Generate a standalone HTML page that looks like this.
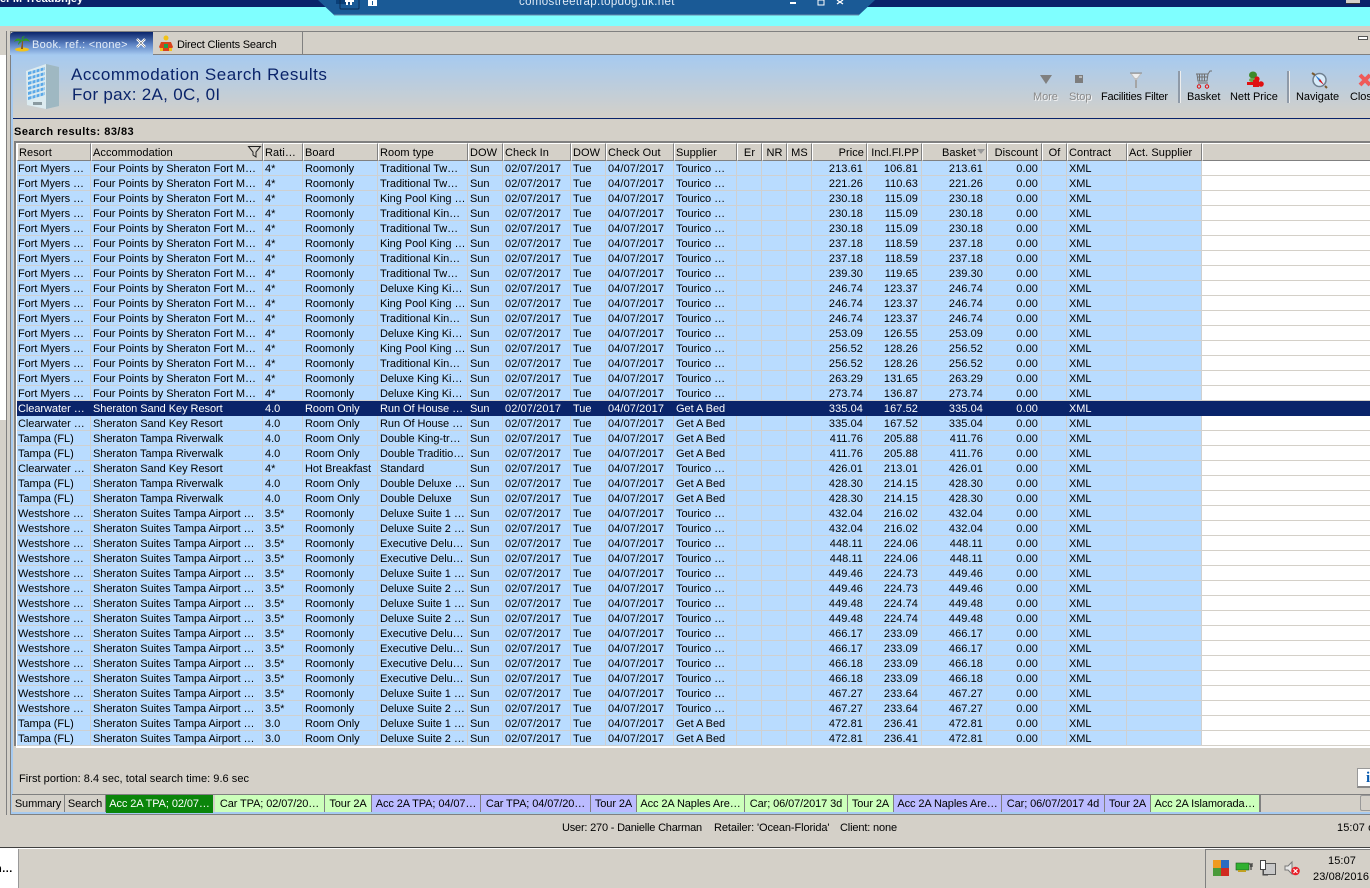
<!DOCTYPE html>
<html><head><meta charset="utf-8"><title>Accommodation Search Results</title>
<style>
html,body{margin:0;padding:0}
body{width:1370px;height:888px;overflow:hidden;position:relative;background:#d4d0c8;font:11px/15px "Liberation Sans",sans-serif;color:#000}
.a{position:absolute;white-space:nowrap}
table{position:absolute;left:17px;table-layout:fixed;border-collapse:separate;border-spacing:0;width:1353px}
#rows{top:161px}
#rows td{height:12px;line-height:12px;padding:2px 0 0 2px;border-right:1px solid #cfd0d0;border-bottom:1px solid #cfd0d0;background:#b9dcff;white-space:nowrap;overflow:hidden;color:#000;letter-spacing:-.05px}
#rows td:nth-child(1){padding-left:1px}
#rows td:nth-child(7),#rows td:nth-child(9){letter-spacing:.1px}
#rows td:nth-child(n+14):nth-child(-n+17){text-align:right;padding:2px 3px 0 0;letter-spacing:.07px}
#rows td:last-child{background:#fff;border-right:0;border-bottom-color:#d4d0c8}
#rows tr.s td{background:#0a246a;color:#fff;border-color:#0a246a}
#rows tr.s td:last-child{background:#0a246a}
#hd{top:143px}
#hd td{height:13px;line-height:13px;padding:3px 0 0 1px;background:#d4d0c8;border-top:1px solid #fff;border-left:1px solid #fff;border-right:1px solid #808080;border-bottom:1px solid #808080;white-space:nowrap;overflow:hidden;letter-spacing:.07px;box-sizing:content-box}
#hd td.r{text-align:right;padding-right:2px;padding-left:0}
#hd td:last-child{border-right:0}
.tab{position:absolute;top:795px;height:16px;padding-top:1px;line-height:17px;text-align:center;white-space:nowrap;overflow:hidden;border-right:1px solid #808080;letter-spacing:-.1px}
.g{background:#ccffbb}.p{background:#bbbbff}.n{background:#d4d0c8}
.tb{position:absolute;top:91px;line-height:13px;white-space:nowrap;letter-spacing:-.05px}
.dis{color:#8a8a8a;text-shadow:1px 1px 0 #f5f5f5}
svg{position:absolute;overflow:visible}
</style></head><body>
<div class="a" style="left:0;top:0;width:1370px;height:7px;background:#0a246a"></div>
<div class="a" style="left:0;top:-8px;color:#fff;font-size:11px;font-weight:bold;line-height:15px">eFM Treadbnjey</div>
<div class="a" style="left:0;top:7px;width:1370px;height:19px;background:#7fffff"></div>
<svg style="left:318px;top:0" width="560" height="16"><path d="M0 0H557L541 15H16Z" fill="#1a5a96"/><path d="M16 15H541" stroke="#6a8cac" stroke-width="1"/><rect x="18" y="0" width="14" height="4" fill="#0a3f78"/></svg>
<svg style="left:340px;top:0" width="40" height="10"><path d="M0 0V8a1 1 0 0 0 1 1H18a1 1 0 0 0 1-1V0" fill="none" stroke="#0b2c55"/><path d="M5 0H14V2H12V5H10V2H8V5H6V2H5Z" fill="#fff"/><rect x="28" y="0" width="9" height="6" fill="#fff"/><rect x="32" y="1" width="1" height="4" fill="#1a5a96"/></svg>
<div class="a" style="left:519px;top:-5px;color:#dfeaf5;font-size:11.5px;line-height:15px;letter-spacing:.35px">comostreetrap.topdog.uk.net</div>
<svg style="left:790px;top:0" width="60" height="8"><rect x="0" y="2" width="6" height="2" fill="#fff"/><rect x="28" y="0" width="6" height="5" fill="none" stroke="#fff"/><path d="M47 0l6 4M53 0l-6 4" stroke="#fff" stroke-width="1.3"/></svg>
<div class="a" style="left:1346px;top:0;width:14px;height:3px;background:#d4d0c8;border-bottom:1px solid #333"></div>

<div class="a" style="left:0;top:31px;width:6px;height:784px;border-right:1px solid #808080;background:#fff"></div>
<div class="a" style="left:0;top:31px;width:6px;height:24px;background:#d4d0c8"></div>
<div class="a" style="left:0;top:420px;width:6px;height:395px;background:#d4d0c8"></div>

<div class="a" style="left:10px;top:31px;width:1360px;height:784px;border-top:1px solid #808080;border-bottom:1px solid #808080;border-left:1px solid #808080;box-sizing:border-box;background:#d4d0c8"></div>
<div class="a" style="left:11px;top:54px;width:2px;height:760px;background:#a6caf0"></div>
<div class="a" style="left:13px;top:812px;width:1357px;height:2px;background:#a6caf0"></div>

<div class="a" style="left:10px;top:32px;width:143px;height:23px;border-radius:4px 0 0 0;background:linear-gradient(#0a246a,#5f85c5 55%,#a6caf0)"></div>
<div class="a" style="left:153px;top:32px;width:149px;height:22px;border-right:1px solid #808080;border-bottom:1px solid #808080;background:#d4d0c8"></div>
<div class="a" style="left:302px;top:54px;width:1068px;height:1px;background:#808080"></div>
<div class="a" style="left:32px;top:38px;color:#e6eef8;letter-spacing:.3px">Book. ref.: &lt;none&gt;</div>
<div class="a" style="left:177px;top:38px;letter-spacing:-.18px">Direct Clients Search</div>
<svg style="left:136px;top:38px" width="11" height="11"><path d="M1 1l8 8M9 1l-8 8" stroke="#fff" stroke-width="2.4"/><path d="M1 1l8 8M9 1l-8 8" stroke="#333" stroke-width=".5"/></svg>
<svg style="left:13px;top:35px" width="18" height="17"><ellipse cx="9" cy="14.5" rx="7" ry="2" fill="#f2c218"/><path d="M9 6C9 9 8 11 8 14H10C10 11 10 9 10 6Z" fill="#8a5a1e"/><path d="M9 6C6 2 3 3 1 7 4 5 6 6 9 6ZM9 6C12 2 15 3 17 7 14 5 12 6 9 6ZM9 6C8 2 10 1 12 1 10 2 10 4 9 6ZM9 6C7 4 5 8 5 10 7 8 8 7 9 6Z" fill="#2f9a1f"/></svg>
<svg style="left:159px;top:35px" width="16" height="17"><circle cx="7" cy="3" r="2.5" fill="#f2c218"/><path d="M2 7H12L14 12 11 16H3L0 12Z" fill="#d9431b"/><rect x="5" y="9" width="4" height="4" fill="#22a04a"/><rect x="1" y="13" width="3" height="3" fill="#f2c218"/><rect x="10" y="13" width="3" height="3" fill="#f2c218"/></svg>
<div class="a" style="left:1358px;top:36px;width:8px;height:2px;background:#fff;border:1px solid #555"></div>

<div class="a" style="left:13px;top:55px;width:1357px;height:63px;background:linear-gradient(#a6caf0,#d4d0c8)"></div>
<div class="a" style="left:13px;top:118px;width:1357px;height:1px;background:#0a246a"></div>
<svg style="left:24px;top:62px" width="37" height="48"><path d="M2 9L22 2 35 5V44L22 47 3 43Z" fill="#bcd0d8"/><path d="M22 2L35 5V44L22 47Z" fill="#9fb8c2"/><path d="M2 9L22 2V47L3 43Z" fill="#dcebf0"/><g fill="#5aa8e8"><path d="M4 10L21 5V8L4 13ZM4 15L21 10V13L4 18ZM4 20L21 15V18L4 23ZM4 25L21 20V23L4 28ZM4 30L21 25V28L4 33ZM4 35L21 30V33L4 38Z"/></g><g stroke="#dcebf0" stroke-width="1"><path d="M8 8V40M12 7V41M16 6V42M20 5V43"/></g><rect x="9" y="40" width="9" height="3" fill="#8a9aa0"/></svg>
<div class="a" style="left:71px;top:64px;font-size:17px;line-height:22px;color:#0a246a;letter-spacing:.52px">Accommodation Search Results</div>
<div class="a" style="left:72px;top:84px;font-size:17px;line-height:22px;color:#0a246a;letter-spacing:.3px">For pax: 2A, 0C, 0I</div>

<svg style="left:1040px;top:75px" width="12" height="10"><path d="M0 0H12L6 9Z" fill="#808080"/></svg>
<svg style="left:1075px;top:75px" width="9" height="9"><rect width="8" height="8" fill="#7d7d7d"/><rect x="4" y="1" width="3" height="2" fill="#b8b8b8"/></svg>
<svg style="left:1129px;top:72px" width="14" height="17"><path d="M1 1H13L8 8V16H6V8Z" fill="#c0c0c0"/><path d="M3 2H11L8 6H6Z" fill="#eee"/><path d="M1 1H13" stroke="#8a8a8a"/><path d="M7 8V16" stroke="#8a8a8a"/></svg>
<div class="a" style="left:1178px;top:71px;width:2px;height:32px;background:#8f9aa8;border-right:1px solid #eee"></div>
<svg style="left:1196px;top:71px" width="16" height="18"><path d="M0 3H12L14 0H16" fill="none" stroke="#707070"/><path d="M1 3L2 10H11L12 3M3.5 3V10M6 3V10M8.5 3V10M2 6H11.5" fill="none" stroke="#707070"/><path d="M2 12H12" stroke="#707070"/><circle cx="3" cy="15.5" r="1.7" fill="none" stroke="#e01010"/><circle cx="11" cy="15.5" r="1.7" fill="none" stroke="#e01010"/></svg>
<svg style="left:1247px;top:71px" width="17" height="18"><ellipse cx="6" cy="4" rx="4" ry="3.5" fill="#3f8a2a"/><ellipse cx="5" cy="9" rx="3" ry="2" fill="#6aa84a"/><circle cx="10" cy="8" r="2.6" fill="#e01010"/><rect x="0" y="11" width="6" height="3" fill="#e01010"/><rect x="6" y="9" width="6" height="7" fill="#e01010"/><circle cx="14" cy="13" r="2.8" fill="#e01010"/></svg>
<div class="a" style="left:1287px;top:71px;width:2px;height:32px;background:#8f9aa8;border-right:1px solid #eee"></div>
<svg style="left:1311px;top:71px" width="17" height="18"><circle cx="8.5" cy="9" r="6.5" fill="#d8ecfa" stroke="#6f7f8f" stroke-width="1.5"/><path d="M4 4L9 8 13 14 8 10Z" fill="#2a78d0"/><path d="M9 8L13 14 8 10Z" fill="#e01010"/><path d="M1 2L4 4M14 15L16 17" stroke="#7a5a2e" stroke-width="2"/></svg>
<svg style="left:1358px;top:73px" width="14" height="14"><path d="M2 2L12 12M12 2L2 12" stroke="#ef5a5a" stroke-width="4"/></svg>

<div class="tb dis" style="left:1033px">More</div>
<div class="tb dis" style="left:1069px">Stop</div>
<div class="tb" style="left:1101px;letter-spacing:-.2px">Facilities Filter</div>
<div class="tb" style="left:1187px">Basket</div>
<div class="tb" style="left:1230px">Nett Price</div>
<div class="tb" style="left:1296px">Navigate</div>
<div class="tb" style="left:1350px">Close</div>

<div class="a" style="left:14px;top:125px;font-weight:bold;letter-spacing:.48px">Search results: 83/83</div>

<div class="a" style="left:14px;top:141px;width:1356px;height:2px;background:#808080"></div>
<div class="a" style="left:14px;top:141px;width:2px;height:605px;background:#808080"></div>
<div class="a" style="left:16px;top:143px;width:1354px;height:603px;background:#fff"></div>
<div class="a" style="left:16px;top:746px;width:1354px;height:2px;background:#fff"></div>

<table id="hd"><colgroup><col style="width:74px"><col style="width:172px"><col style="width:40px"><col style="width:75px"><col style="width:90px"><col style="width:35px"><col style="width:68px"><col style="width:35px"><col style="width:68px"><col style="width:63px"><col style="width:25px"><col style="width:25px"><col style="width:25px"><col style="width:55px"><col style="width:55px"><col style="width:65px"><col style="width:55px"><col style="width:25px"><col style="width:60px"><col style="width:75px"><col></colgroup><tr><td>Resort<td>Accommodation<td>Rati…<td>Board<td>Room type<td>DOW<td>Check In<td>DOW<td>Check Out<td>Supplier<td style="text-align:center;padding-left:0">Er<td style="text-align:center;padding-left:0">NR<td style="text-align:center;padding-left:0">MS<td class="r">Price<td class="r">Incl.Fl.PP<td class="r" style="padding-right:10px">Basket<td class="r" style="padding-right:3px">Discount<td style="text-align:center;padding-left:0">Of<td>Contract<td>Act. Supplier<td></tr></table>
<svg style="left:248px;top:146px" width="13" height="12"><path d="M.5.5H12.5L8 6V11L5 9V6Z" fill="none" stroke="#222"/></svg>
<svg style="left:977px;top:149px" width="8" height="5"><path d="M0 0H8L4 5Z" fill="#999"/></svg>

<table id="rows"><colgroup><col style="width:74px"><col style="width:172px"><col style="width:40px"><col style="width:75px"><col style="width:90px"><col style="width:35px"><col style="width:68px"><col style="width:35px"><col style="width:68px"><col style="width:63px"><col style="width:25px"><col style="width:25px"><col style="width:25px"><col style="width:55px"><col style="width:55px"><col style="width:65px"><col style="width:55px"><col style="width:25px"><col style="width:60px"><col style="width:75px"><col></colgroup>
<tr><td>Fort Myers …<td>Four Points by Sheraton Fort M…<td>4*<td>Roomonly<td>Traditional Tw…<td>Sun<td>02/07/2017<td>Tue<td>04/07/2017<td>Tourico …<td><td><td><td>213.61<td>106.81<td>213.61<td>0.00<td><td>XML<td><td>
<tr><td>Fort Myers …<td>Four Points by Sheraton Fort M…<td>4*<td>Roomonly<td>Traditional Tw…<td>Sun<td>02/07/2017<td>Tue<td>04/07/2017<td>Tourico …<td><td><td><td>221.26<td>110.63<td>221.26<td>0.00<td><td>XML<td><td>
<tr><td>Fort Myers …<td>Four Points by Sheraton Fort M…<td>4*<td>Roomonly<td>King Pool King …<td>Sun<td>02/07/2017<td>Tue<td>04/07/2017<td>Tourico …<td><td><td><td>230.18<td>115.09<td>230.18<td>0.00<td><td>XML<td><td>
<tr><td>Fort Myers …<td>Four Points by Sheraton Fort M…<td>4*<td>Roomonly<td>Traditional Kin…<td>Sun<td>02/07/2017<td>Tue<td>04/07/2017<td>Tourico …<td><td><td><td>230.18<td>115.09<td>230.18<td>0.00<td><td>XML<td><td>
<tr><td>Fort Myers …<td>Four Points by Sheraton Fort M…<td>4*<td>Roomonly<td>Traditional Tw…<td>Sun<td>02/07/2017<td>Tue<td>04/07/2017<td>Tourico …<td><td><td><td>230.18<td>115.09<td>230.18<td>0.00<td><td>XML<td><td>
<tr><td>Fort Myers …<td>Four Points by Sheraton Fort M…<td>4*<td>Roomonly<td>King Pool King …<td>Sun<td>02/07/2017<td>Tue<td>04/07/2017<td>Tourico …<td><td><td><td>237.18<td>118.59<td>237.18<td>0.00<td><td>XML<td><td>
<tr><td>Fort Myers …<td>Four Points by Sheraton Fort M…<td>4*<td>Roomonly<td>Traditional Kin…<td>Sun<td>02/07/2017<td>Tue<td>04/07/2017<td>Tourico …<td><td><td><td>237.18<td>118.59<td>237.18<td>0.00<td><td>XML<td><td>
<tr><td>Fort Myers …<td>Four Points by Sheraton Fort M…<td>4*<td>Roomonly<td>Traditional Tw…<td>Sun<td>02/07/2017<td>Tue<td>04/07/2017<td>Tourico …<td><td><td><td>239.30<td>119.65<td>239.30<td>0.00<td><td>XML<td><td>
<tr><td>Fort Myers …<td>Four Points by Sheraton Fort M…<td>4*<td>Roomonly<td>Deluxe King Ki…<td>Sun<td>02/07/2017<td>Tue<td>04/07/2017<td>Tourico …<td><td><td><td>246.74<td>123.37<td>246.74<td>0.00<td><td>XML<td><td>
<tr><td>Fort Myers …<td>Four Points by Sheraton Fort M…<td>4*<td>Roomonly<td>King Pool King …<td>Sun<td>02/07/2017<td>Tue<td>04/07/2017<td>Tourico …<td><td><td><td>246.74<td>123.37<td>246.74<td>0.00<td><td>XML<td><td>
<tr><td>Fort Myers …<td>Four Points by Sheraton Fort M…<td>4*<td>Roomonly<td>Traditional Kin…<td>Sun<td>02/07/2017<td>Tue<td>04/07/2017<td>Tourico …<td><td><td><td>246.74<td>123.37<td>246.74<td>0.00<td><td>XML<td><td>
<tr><td>Fort Myers …<td>Four Points by Sheraton Fort M…<td>4*<td>Roomonly<td>Deluxe King Ki…<td>Sun<td>02/07/2017<td>Tue<td>04/07/2017<td>Tourico …<td><td><td><td>253.09<td>126.55<td>253.09<td>0.00<td><td>XML<td><td>
<tr><td>Fort Myers …<td>Four Points by Sheraton Fort M…<td>4*<td>Roomonly<td>King Pool King …<td>Sun<td>02/07/2017<td>Tue<td>04/07/2017<td>Tourico …<td><td><td><td>256.52<td>128.26<td>256.52<td>0.00<td><td>XML<td><td>
<tr><td>Fort Myers …<td>Four Points by Sheraton Fort M…<td>4*<td>Roomonly<td>Traditional Kin…<td>Sun<td>02/07/2017<td>Tue<td>04/07/2017<td>Tourico …<td><td><td><td>256.52<td>128.26<td>256.52<td>0.00<td><td>XML<td><td>
<tr><td>Fort Myers …<td>Four Points by Sheraton Fort M…<td>4*<td>Roomonly<td>Deluxe King Ki…<td>Sun<td>02/07/2017<td>Tue<td>04/07/2017<td>Tourico …<td><td><td><td>263.29<td>131.65<td>263.29<td>0.00<td><td>XML<td><td>
<tr><td>Fort Myers …<td>Four Points by Sheraton Fort M…<td>4*<td>Roomonly<td>Deluxe King Ki…<td>Sun<td>02/07/2017<td>Tue<td>04/07/2017<td>Tourico …<td><td><td><td>273.74<td>136.87<td>273.74<td>0.00<td><td>XML<td><td>
<tr class="s"><td>Clearwater …<td>Sheraton Sand Key Resort<td>4.0<td>Room Only<td>Run Of House …<td>Sun<td>02/07/2017<td>Tue<td>04/07/2017<td>Get A Bed<td><td><td><td>335.04<td>167.52<td>335.04<td>0.00<td><td>XML<td><td>
<tr><td>Clearwater …<td>Sheraton Sand Key Resort<td>4.0<td>Room Only<td>Run Of House …<td>Sun<td>02/07/2017<td>Tue<td>04/07/2017<td>Get A Bed<td><td><td><td>335.04<td>167.52<td>335.04<td>0.00<td><td>XML<td><td>
<tr><td>Tampa (FL)<td>Sheraton Tampa Riverwalk<td>4.0<td>Room Only<td>Double King-tr…<td>Sun<td>02/07/2017<td>Tue<td>04/07/2017<td>Get A Bed<td><td><td><td>411.76<td>205.88<td>411.76<td>0.00<td><td>XML<td><td>
<tr><td>Tampa (FL)<td>Sheraton Tampa Riverwalk<td>4.0<td>Room Only<td>Double Traditio…<td>Sun<td>02/07/2017<td>Tue<td>04/07/2017<td>Get A Bed<td><td><td><td>411.76<td>205.88<td>411.76<td>0.00<td><td>XML<td><td>
<tr><td>Clearwater …<td>Sheraton Sand Key Resort<td>4*<td>Hot Breakfast<td>Standard<td>Sun<td>02/07/2017<td>Tue<td>04/07/2017<td>Tourico …<td><td><td><td>426.01<td>213.01<td>426.01<td>0.00<td><td>XML<td><td>
<tr><td>Tampa (FL)<td>Sheraton Tampa Riverwalk<td>4.0<td>Room Only<td>Double Deluxe …<td>Sun<td>02/07/2017<td>Tue<td>04/07/2017<td>Get A Bed<td><td><td><td>428.30<td>214.15<td>428.30<td>0.00<td><td>XML<td><td>
<tr><td>Tampa (FL)<td>Sheraton Tampa Riverwalk<td>4.0<td>Room Only<td>Double Deluxe<td>Sun<td>02/07/2017<td>Tue<td>04/07/2017<td>Get A Bed<td><td><td><td>428.30<td>214.15<td>428.30<td>0.00<td><td>XML<td><td>
<tr><td>Westshore …<td>Sheraton Suites Tampa Airport …<td>3.5*<td>Roomonly<td>Deluxe Suite 1 …<td>Sun<td>02/07/2017<td>Tue<td>04/07/2017<td>Tourico …<td><td><td><td>432.04<td>216.02<td>432.04<td>0.00<td><td>XML<td><td>
<tr><td>Westshore …<td>Sheraton Suites Tampa Airport …<td>3.5*<td>Roomonly<td>Deluxe Suite 2 …<td>Sun<td>02/07/2017<td>Tue<td>04/07/2017<td>Tourico …<td><td><td><td>432.04<td>216.02<td>432.04<td>0.00<td><td>XML<td><td>
<tr><td>Westshore …<td>Sheraton Suites Tampa Airport …<td>3.5*<td>Roomonly<td>Executive Delu…<td>Sun<td>02/07/2017<td>Tue<td>04/07/2017<td>Tourico …<td><td><td><td>448.11<td>224.06<td>448.11<td>0.00<td><td>XML<td><td>
<tr><td>Westshore …<td>Sheraton Suites Tampa Airport …<td>3.5*<td>Roomonly<td>Executive Delu…<td>Sun<td>02/07/2017<td>Tue<td>04/07/2017<td>Tourico …<td><td><td><td>448.11<td>224.06<td>448.11<td>0.00<td><td>XML<td><td>
<tr><td>Westshore …<td>Sheraton Suites Tampa Airport …<td>3.5*<td>Roomonly<td>Deluxe Suite 1 …<td>Sun<td>02/07/2017<td>Tue<td>04/07/2017<td>Tourico …<td><td><td><td>449.46<td>224.73<td>449.46<td>0.00<td><td>XML<td><td>
<tr><td>Westshore …<td>Sheraton Suites Tampa Airport …<td>3.5*<td>Roomonly<td>Deluxe Suite 2 …<td>Sun<td>02/07/2017<td>Tue<td>04/07/2017<td>Tourico …<td><td><td><td>449.46<td>224.73<td>449.46<td>0.00<td><td>XML<td><td>
<tr><td>Westshore …<td>Sheraton Suites Tampa Airport …<td>3.5*<td>Roomonly<td>Deluxe Suite 1 …<td>Sun<td>02/07/2017<td>Tue<td>04/07/2017<td>Tourico …<td><td><td><td>449.48<td>224.74<td>449.48<td>0.00<td><td>XML<td><td>
<tr><td>Westshore …<td>Sheraton Suites Tampa Airport …<td>3.5*<td>Roomonly<td>Deluxe Suite 2 …<td>Sun<td>02/07/2017<td>Tue<td>04/07/2017<td>Tourico …<td><td><td><td>449.48<td>224.74<td>449.48<td>0.00<td><td>XML<td><td>
<tr><td>Westshore …<td>Sheraton Suites Tampa Airport …<td>3.5*<td>Roomonly<td>Executive Delu…<td>Sun<td>02/07/2017<td>Tue<td>04/07/2017<td>Tourico …<td><td><td><td>466.17<td>233.09<td>466.17<td>0.00<td><td>XML<td><td>
<tr><td>Westshore …<td>Sheraton Suites Tampa Airport …<td>3.5*<td>Roomonly<td>Executive Delu…<td>Sun<td>02/07/2017<td>Tue<td>04/07/2017<td>Tourico …<td><td><td><td>466.17<td>233.09<td>466.17<td>0.00<td><td>XML<td><td>
<tr><td>Westshore …<td>Sheraton Suites Tampa Airport …<td>3.5*<td>Roomonly<td>Executive Delu…<td>Sun<td>02/07/2017<td>Tue<td>04/07/2017<td>Tourico …<td><td><td><td>466.18<td>233.09<td>466.18<td>0.00<td><td>XML<td><td>
<tr><td>Westshore …<td>Sheraton Suites Tampa Airport …<td>3.5*<td>Roomonly<td>Executive Delu…<td>Sun<td>02/07/2017<td>Tue<td>04/07/2017<td>Tourico …<td><td><td><td>466.18<td>233.09<td>466.18<td>0.00<td><td>XML<td><td>
<tr><td>Westshore …<td>Sheraton Suites Tampa Airport …<td>3.5*<td>Roomonly<td>Deluxe Suite 1 …<td>Sun<td>02/07/2017<td>Tue<td>04/07/2017<td>Tourico …<td><td><td><td>467.27<td>233.64<td>467.27<td>0.00<td><td>XML<td><td>
<tr><td>Westshore …<td>Sheraton Suites Tampa Airport …<td>3.5*<td>Roomonly<td>Deluxe Suite 2 …<td>Sun<td>02/07/2017<td>Tue<td>04/07/2017<td>Tourico …<td><td><td><td>467.27<td>233.64<td>467.27<td>0.00<td><td>XML<td><td>
<tr><td>Tampa (FL)<td>Sheraton Suites Tampa Airport …<td>3.0<td>Room Only<td>Deluxe Suite 1 …<td>Sun<td>02/07/2017<td>Tue<td>04/07/2017<td>Get A Bed<td><td><td><td>472.81<td>236.41<td>472.81<td>0.00<td><td>XML<td><td>
<tr><td>Tampa (FL)<td>Sheraton Suites Tampa Airport …<td>3.0<td>Room Only<td>Deluxe Suite 2 …<td>Sun<td>02/07/2017<td>Tue<td>04/07/2017<td>Get A Bed<td><td><td><td>472.81<td>236.41<td>472.81<td>0.00<td><td>XML<td><td>
</table>

<div class="a" style="left:19px;top:772px;letter-spacing:.04px">First portion: 8.4 sec, total search time: 9.6 sec</div>
<div class="a" style="left:1357px;top:768px;width:13px;height:20px;background:#fff;border-top:1px solid #999;border-left:1px solid #999;border-bottom:2px solid #888;box-sizing:border-box;color:#0a5cb0;font:bold 15px/18px 'Liberation Serif',serif;padding-left:8px">i</div>

<div class="a" style="left:12px;top:794px;width:1358px;height:1px;background:#808080"></div>
<div class="tab n" style="left:12px;width:52px">Summary</div>
<div class="tab n" style="left:65px;width:40px">Search</div>
<div class="tab" style="left:106px;width:107px;height:17px;background:#0a850a;color:#fff;border-right:0">Acc 2A TPA; 02/07…</div>
<div class="tab g" style="left:215px;width:109px">Car TPA; 02/07/20…</div>
<div class="tab g" style="left:325px;width:46px">Tour 2A</div>
<div class="tab p" style="left:372px;width:108px">Acc 2A TPA; 04/07…</div>
<div class="tab p" style="left:481px;width:109px">Car TPA; 04/07/20…</div>
<div class="tab p" style="left:591px;width:45px">Tour 2A</div>
<div class="tab g" style="left:637px;width:107px">Acc 2A Naples Are…</div>
<div class="tab g" style="left:745px;width:102px">Car; 06/07/2017 3d</div>
<div class="tab g" style="left:848px;width:45px">Tour 2A</div>
<div class="tab p" style="left:894px;width:107px">Acc 2A Naples Are…</div>
<div class="tab p" style="left:1002px;width:102px">Car; 06/07/2017 4d</div>
<div class="tab p" style="left:1105px;width:45px">Tour 2A</div>
<div class="tab g" style="left:1151px;width:108px">Acc 2A Islamorada…</div>
<div class="a" style="left:1260px;top:795px;width:1px;height:17px;background:#808080"></div>
<div class="a" style="left:1360px;top:795px;width:10px;height:16px;background:#d4d0c8;border:1px solid #999;border-right:0;box-sizing:border-box;border-radius:2px 0 0 2px"></div>

<div class="a" style="left:562px;top:821px;letter-spacing:-.2px">User: 270 - Danielle Charman</div>
<div class="a" style="left:714px;top:821px;letter-spacing:-.1px">Retailer: 'Ocean-Florida'</div>
<div class="a" style="left:840px;top:821px;letter-spacing:-.15px">Client: none</div>
<div class="a" style="left:1337px;top:821px;letter-spacing:.1px">15:07 on</div>

<div class="a" style="left:0;top:847px;width:1370px;height:1px;background:#404040"></div>
<div class="a" style="left:0;top:848px;width:1370px;height:40px;background:#d4d0c8;border-top:1px solid #fff;box-sizing:border-box"></div>
<div class="a" style="left:0;top:849px;width:19px;height:39px;background:#fff;border-right:1px solid #999;box-sizing:border-box"></div>
<div class="a" style="left:-5px;top:862px;font-weight:bold;line-height:15px">h…</div>
<div class="a" style="left:1205px;top:849px;width:165px;height:39px;border-left:1px solid #808080;border-top:1px solid #808080;box-sizing:border-box"></div>
<svg style="left:1213px;top:860px" width="16" height="16"><rect width="8" height="8" fill="#f09a20"/><rect x="8" width="8" height="8" fill="#2a6cc0"/><rect y="8" width="8" height="8" fill="#4a9a3a"/><rect x="8" y="8" width="8" height="8" fill="#d02a20"/></svg>
<svg style="left:1236px;top:862px" width="17" height="12"><rect y="1" width="13" height="7" fill="#30b030" stroke="#1a5a1a" stroke-width=".6"/><path d="M13 2H17M15 2V8M14 4H17" stroke="#222" fill="none"/><path d="M2 8V10H10V8" fill="#c0a020"/></svg>
<svg style="left:1260px;top:860px" width="16" height="17"><rect x="3.5" y="3.5" width="12" height="11" fill="#c8c8c8" stroke="#555"/><rect x=".5" y=".5" width="5" height="9" fill="#fff" stroke="#444"/><path d="M3 9V15H8" stroke="#444" fill="none"/></svg>
<svg style="left:1284px;top:861px" width="17" height="16"><path d="M1 5H4L8 1V13L4 9H1Z" fill="#e8e8e8" stroke="#777"/><circle cx="11.5" cy="10" r="4.3" fill="#e8202a"/><path d="M9.5 8l4 4M13.5 8l-4 4" stroke="#fff" stroke-width="1.2"/></svg>
<div class="a" style="left:1328px;top:854px;letter-spacing:.1px">15:07</div>
<div class="a" style="left:1313px;top:870px;letter-spacing:.1px">23/08/2016</div>
</body></html>
